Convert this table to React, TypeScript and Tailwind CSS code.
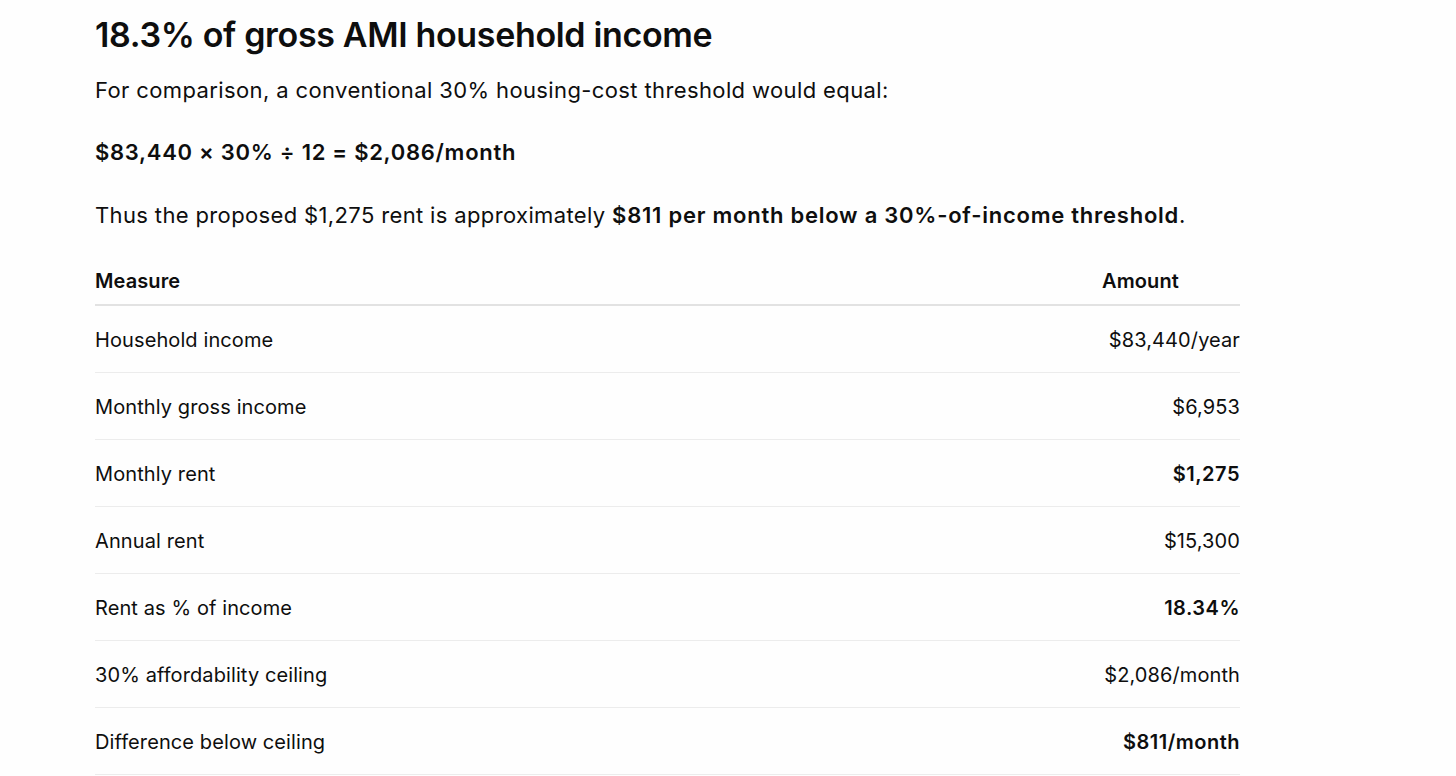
const rows: { label: string; value: string; bold?: boolean }[] = [
  { label: 'Household income', value: '$83,440/year' },
  { label: 'Monthly gross income', value: '$6,953' },
  { label: 'Monthly rent', value: '$1,275', bold: true },
  { label: 'Annual rent', value: '$15,300' },
  { label: 'Rent as % of income', value: '18.34%', bold: true },
  { label: '30% affordability ceiling', value: '$2,086/month' },
  { label: 'Difference below ceiling', value: '$811/month', bold: true },
];

export default function App() {
  return (
    <div className="min-h-screen bg-[#fefefe] text-[#0e0e0e] font-['Inter','Liberation_Sans',sans-serif]">
      <div className="pl-[95px] pt-[13px] w-[1240px] max-w-full">
        <h2 className="text-[34px] leading-[44px] font-semibold tracking-[-0.01em]">
          18.3% of gross AMI household income
        </h2>

        <p className="mt-[18px] text-[22px] leading-[30px] tracking-[0.38px]">
          For comparison, a conventional 30% housing-cost threshold would equal:
        </p>

        <p className="mt-[32px] text-[22px] leading-[30px] font-semibold tracking-[0.72px]">
          $83,440 × 30% ÷ 12 = $2,086/month
        </p>

        <p className="mt-[33px] text-[22px] leading-[30px] tracking-[0.36px]">
          Thus the proposed $1,275 rent is approximately{' '}
          <span className="font-semibold tracking-[0.76px]">$811 per month below a 30%-of-income threshold</span>.
        </p>

        <table className="mt-[11px] w-[1145px] border-collapse text-[20px]">
          <thead>
            <tr className="border-b-2 border-[#e2e2e2]">
              <th className="pt-[26px] pb-[9px] text-left font-semibold leading-[28px] tracking-[0.1px]">Measure</th>
              <th className="w-[138px] pt-[26px] pb-[9px] text-left font-semibold leading-[28px] tracking-[0.1px]">
                Amount
              </th>
            </tr>
          </thead>
          <tbody>
            {rows.map((row) => (
              <tr key={row.label} className="border-b border-[#ececec]">
                <td className="h-[67px] pt-[2px] leading-[28px] tracking-[0.1px]">{row.label}</td>
                <td
                  className={`h-[67px] pt-[2px] text-right leading-[28px] ${
                    row.bold ? 'font-semibold tracking-[0.5px]' : 'tracking-[0.1px]'
                  }`}
                >
                  {row.value}
                </td>
              </tr>
            ))}
          </tbody>
        </table>
      </div>
    </div>
  );
}
